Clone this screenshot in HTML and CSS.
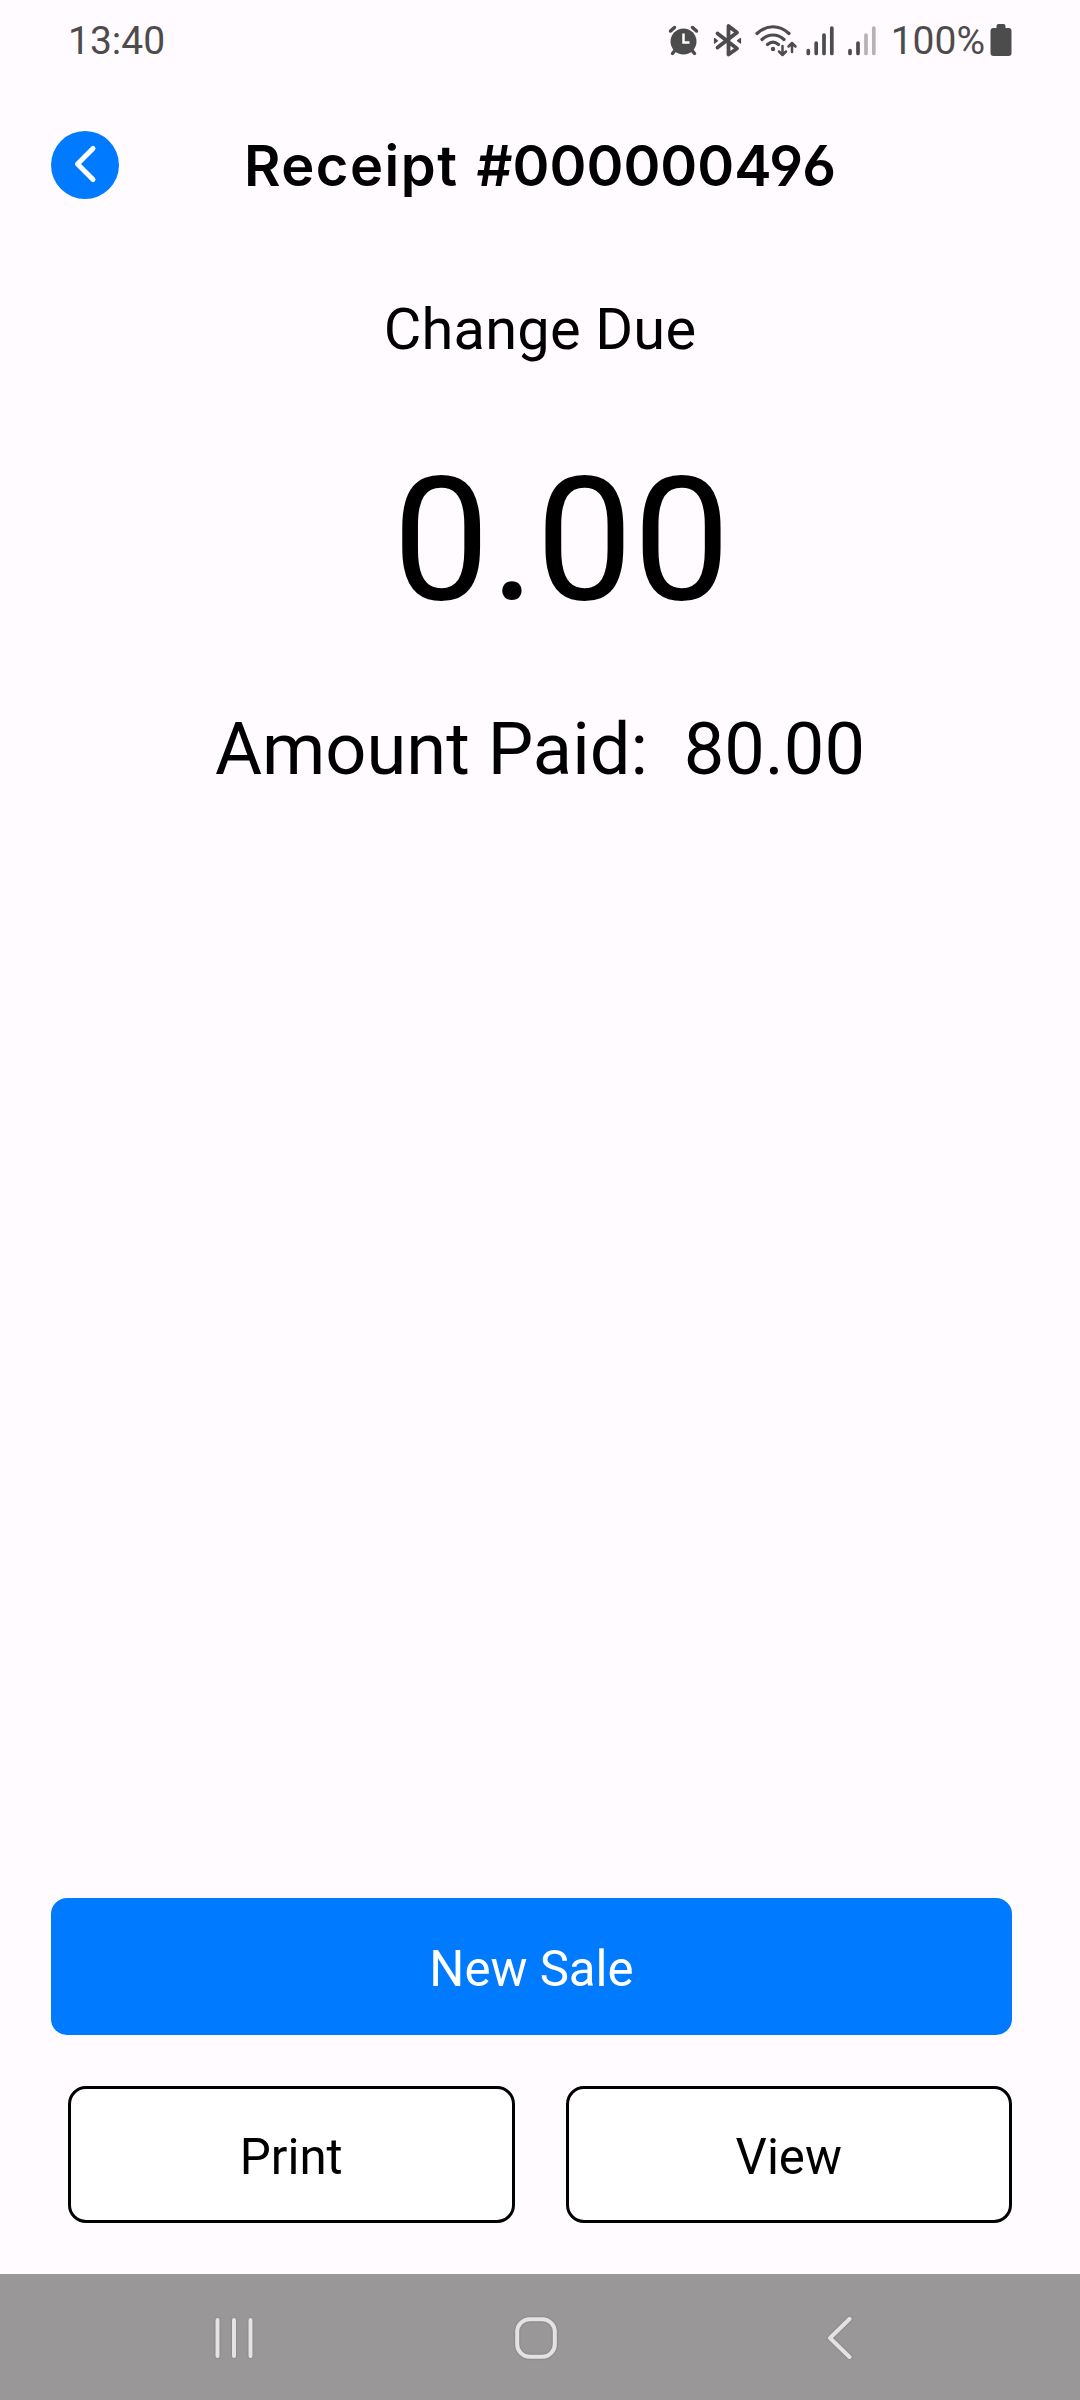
FILE: index.html
```html
<!DOCTYPE html>
<html lang="en">
  <head>
    <meta charset="UTF-8" />
    <title>Receipt #000000496</title>
    <link rel="stylesheet" href="styles.css">
  </head>
  <body>
    <div class="status-bar">
      <span class="status-time">13:40</span>
      <svg class="status-icons" width="190" height="60" viewBox="0 0 190 60" fill="none" stroke="currentColor" stroke-linecap="round" stroke-linejoin="round">
        <!-- alarm -->
        <circle cx="33.5" cy="31.5" r="13" fill="currentColor" stroke="none" />
        <path d="M20.5 21l4-3.5M46.5 21l-4-3.5M24.5 41l-2 2.5M42.5 41l2 2.5" stroke-width="3.5" />
        <path d="M33.5 23.5v9h6" stroke="#fffbff" stroke-width="2.5" stroke-linecap="butt" stroke-linejoin="miter" />
        <!-- bluetooth -->
        <path d="M67.5 23.5l19.5 15-8.5 6V16l8.5 6.5-19.5 15" stroke-width="3.8" />
        <path d="M64.5 28.5l3 2.3-3 2.3zM90.5 28.5l-3 2.3 3 2.3z" fill="currentColor" stroke-width="1.2" />
        <!-- wifi -->
        <path d="M107 23.5c10-9 22-9 32 0M112 29.5c6.5-6 15.5-6 22 0M117.5 34.5c3.5-3 7.5-3 11 0" stroke-width="3.2" />
        <circle cx="123" cy="39" r="2.2" fill="currentColor" stroke="none" />
        <path d="M132.5 36v8.5M129 41.5l3.5 3.5 3.5-3.5M142 42v-8.500M138.5 36.5l3.5-3.5 3.5 3.5" stroke-width="2.5" />
        <!-- signal, first SIM -->
        <path d="M158.3 40.5v3M166.2 33v10.5M174 25v18.5M181.8 18v25.5" stroke-width="3.7" />
      </svg>
      <svg class="sim-icon" width="40" height="60" viewBox="0 0 40 60" fill="none" stroke="currentColor" stroke-width="3.7" stroke-linecap="round">
        <path d="M10 40.5v3M18 33v10.5" />
        <path d="M26 25v18.5M33.8 18v25.5" stroke="#b5b3b5" />
      </svg>
      <span class="status-battery">100%</span>
      <svg class="battery-icon" width="22" height="33" viewBox="0 0 22 33" fill="currentColor">
        <path d="M6.5 4V2q0-2 2-2h5q2 0 2 2v2h3q3 0 3 3v22q0 3-3 3h-15q-3 0-3-3V7q0-3 3-3z" />
      </svg>
    </div>

    <div class="header">
      <button class="back-button" aria-label="Back">
        <svg width="68" height="68" viewBox="0 0 68 68" fill="none" stroke="#fff" stroke-width="5" stroke-linecap="round" stroke-linejoin="round">
          <path d="M42 17.5L26.5 33 42 48.5" />
        </svg>
      </button>
      <h1 class="title"><span class="title-word">Receipt</span> #000000496</h1>
    </div>

    <div class="summary">
      <div class="change-label">Change Due</div>
      <div class="change-amount"> 0.00</div>
      <div class="amount-paid">Amount Paid:  80.00</div>
    </div>

    <div class="actions">
      <button class="btn btn-primary">New Sale</button>
      <div class="actions-row">
        <button class="btn btn-outline">Print</button>
        <button class="btn btn-outline">View</button>
      </div>
    </div>

    <div class="nav-bar">
      <svg class="nav-recents" width="44" height="52" viewBox="0 0 44 52">
        <path d="M5.5 8v36M22 8v36M38.5 8v36" />
      </svg>
      <svg class="nav-home" width="52" height="52" viewBox="0 0 52 52">
        <rect x="7.2" y="7.2" width="37.6" height="37.6" rx="12.5" />
      </svg>
      <svg class="nav-back" width="32" height="52" viewBox="0 0 32 52">
        <path d="M25.5 7L6 26l19.5 19" />
      </svg>
    </div>
  </body>
</html>
```
FILE: styles.css
```css
:root {
  --primary-color: #007aff;
  --bg-page: #fffbff;
  --bg-nav: #999798;
  --text-primary: #000;
  --text-status: #4d4c4d;
}

/* Base styles */
* {
  box-sizing: border-box;
}

body {
  width: 1080px;
  height: 2400px;
  margin: 0;
  display: flex;
  flex-direction: column;
  font-family: Roboto, sans-serif;
  background-color: var(--bg-page);
  color: var(--text-primary);
  overflow: hidden;
}

svg {
  display: block;
  flex-shrink: 0;
}

/* Status bar */
.status-bar {
  height: 80px;
  padding: 10px 68px 0 68px;
  display: flex;
  align-items: flex-start;
  color: var(--text-status);
}

.status-time,
.status-battery {
  font-size: 39px;
  line-height: 62px;
}

.status-icons {
  margin-left: auto;
}

.status-battery {
  margin-left: 11px;
}

.battery-icon {
  margin: 14px 0 0 5px;
}

/* Header */
.header {
  height: 170px;
  padding: 51px 51px 0;
  display: grid;
  grid-template-columns: 68px 1fr 68px;
  align-items: start;
}

.back-button {
  width: 68px;
  height: 68px;
  padding: 0;
  border: none;
  border-radius: 50%;
  background: var(--primary-color);
}

.title {
  margin: 0;
  font-family: Inter, sans-serif;
  font-size: 56px;
  font-weight: 560;
  line-height: 70px;
  word-spacing: 4px;
  text-align: center;
  white-space: nowrap;
  font-feature-settings: 'cv03', 'cv04';
}

.title-word {
  letter-spacing: 1.5px;
}

/* Change and payment amounts */
.summary {
  flex: 1;
  padding-top: 45px;
  text-align: center;
}

.change-label {
  font-size: 57.75px;
  line-height: 68px;
  letter-spacing: 0.2px;
}

.change-amount {
  margin-top: 75px;
  font-size: 173.25px;
  line-height: 203px;
  white-space: pre;
}

.amount-paid {
  margin-top: 67px;
  font-size: 72.19px;
  line-height: 84px;
  white-space: pre;
}

/* Buttons */
.actions {
  padding: 0 68px 51px 51px;
}

.actions-row {
  display: flex;
  gap: 51px;
  margin: 51px 0 0 17px;
}

.btn {
  flex: 1;
  height: 137px;
  padding: 5px 0 0;
  border: none;
  border-radius: 16px;
  font-family: inherit;
  font-size: 49.2px;
}

.btn-primary {
  display: block;
  width: 100%;
  background: var(--primary-color);
  color: #fff;
}

.btn-outline {
  border: 3px solid #000;
  border-radius: 18px;
  background: #fff;
  color: var(--text-primary);
}

/* System navigation */
.nav-bar {
  height: 126px;
  padding: 2px 0 0 212px;
  display: flex;
  align-items: center;
  background: var(--bg-nav);
}

.nav-bar svg {
  fill: none;
  stroke: #e4e2e4;
  stroke-width: 4;
  stroke-linecap: round;
  stroke-linejoin: round;
  filter: drop-shadow(0 0 1px rgba(0, 0, 0, 0.2));
}

.nav-home {
  margin-left: 254px;
}

.nav-back {
  margin-left: 262px;
}
```
